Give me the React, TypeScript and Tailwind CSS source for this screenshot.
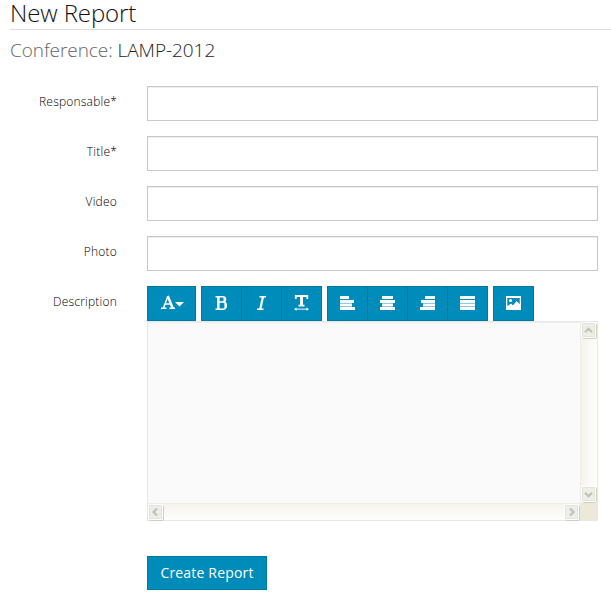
import type { ReactNode } from "react";

const labelClass = "w-[117px] shrink-0 pt-[6px] text-right text-[12px] leading-[20px] font-light tracking-[0.2px] text-black";

function Field({ label }: { label: string }) {
  return (
    <div className="mb-[15px] flex h-[35px]">
      <label className={labelClass}>{label}</label>
      <input className="ml-[30px] h-[35px] w-[451px] border border-[#c8c8c8] bg-white px-2 shadow-[inset_0_1px_1px_rgba(0,0,0,0.075)] outline-none" />
    </div>
  );
}

function Group({ children }: { children: ReactNode }) {
  return <div className="flex h-[35px] divide-x divide-[#0079a1] border border-[#0079a1] bg-[#008cba]">{children}</div>;
}

function Tool({ children }: { children: ReactNode }) {
  return (
    <button className="box-content flex h-[31px] w-[39px] items-center justify-center pb-[2px] text-white">{children}</button>
  );
}

function Lines({ rows }: { rows: number[][] }) {
  return (
    <svg width="15" height="14" viewBox="0 0 15 14" shapeRendering="crispEdges">
      <rect x={rows[0][0]} y="0" width={rows[0][1]} height="3" fill="#fff" />
      <rect x={rows[1][0]} y="4" width={rows[1][1]} height="3" fill="#fff" />
      <rect x={rows[2][0]} y="7" width={rows[2][1]} height="4" fill="#8fcbe0" />
      <rect x={rows[2][0]} y="8" width={rows[2][1]} height="2" fill="#fff" />
      <rect x={rows[3][0]} y="11" width={rows[3][1]} height="3" fill="#fff" />
    </svg>
  );
}

function ScrollButton({ d }: { d: string }) {
  return (
    <svg width="16" height="17" viewBox="0 0 16 17" className="block shrink-0">
      <rect x="1.5" y="1.5" width="14" height="15" rx="1.5" fill="none" stroke="#cfcfbd" />
      <rect x="0.5" y="0.5" width="14" height="15" rx="1" fill="#eeeee9" stroke="#fff" />
      <rect x="1.5" y="1.5" width="12" height="13" rx="1" fill="none" stroke="#e2e2da" />
      <path d={d} fill="none" stroke="#c0c0bc" strokeWidth="2.2" />
    </svg>
  );
}

export default function App() {
  return (
    <main className="h-[601px] w-[611px] bg-white font-['Open_Sans',sans-serif] text-[#222]">
      <h1 className="ml-[10px] h-[30px] border-b border-[#ddd] text-[24px] leading-[26px] font-light tracking-[-0.1px] text-[#111]">
        New Report
      </h1>
      <h2 className="ml-[10px] h-[56px] pt-[6px] text-[19px] leading-[28px] font-light tracking-[-0.06px] text-[#666]">
        Conference: <span className="text-[#222]">LAMP-2012</span>
      </h2>
      <form>
        <Field label="Responsable*" />
        <Field label="Title*" />
        <Field label="Video" />
        <Field label="Photo" />
        <div className="flex">
          <label className={labelClass}>Description</label>
          <div className="ml-[30px] w-[451px]">
            <div className="flex gap-[5px]">
              <Group>
                <button className="flex w-[47px] items-center justify-center pb-[2px] pl-[2px] text-white">
                  <svg width="23" height="15" viewBox="0 0 23 15">
                    <path d="M0 13.3h5.5M8.5 13.3H14M2.5 13 6.8 1.5M4 9h6" fill="none" stroke="#fff" strokeWidth="1.5" />
                    <path d="m6.8 1 4.8 12" stroke="#fff" strokeWidth="2.4" />
                    <path d="M14 7h9l-4.5 4.5z" fill="#fff" />
                  </svg>
                </button>
              </Group>
              <Group>
                <Tool>
                  <svg width="14" height="16" viewBox="0 0 14 16" fill="none" stroke="#fff">
                    <path d="M0.5 1.8h7c4 0 4 5.2 0 5.2H3.5M.5 14.2h7c5 0 5-7.2 0-7.2" strokeWidth="1.6" />
                    <path d="M3.3 2v12" strokeWidth="2.6" />
                    <path d="M9.5 3v3M10.4 8.5v4" strokeWidth="2" />
                  </svg>
                </Tool>
                <Tool>
                  <svg width="10" height="16" viewBox="0 0 10 16" fill="none" stroke="#fff">
                    <path d="M2.5 1.7H9M0 14.3h6.5" strokeWidth="1.5" />
                    <path d="M6 1.5 3.2 14.5" strokeWidth="2.2" />
                  </svg>
                </Tool>
                <Tool>
                  <svg width="15" height="17" viewBox="0 0 15 17" fill="none" stroke="#fff">
                    <path d="M1.8 5V2h11.5v3M4.5 11.7h6" strokeWidth="1.8" />
                    <path d="M7.5 2v10" strokeWidth="3" />
                    <path d="M1 15.2h13" stroke="#b0dcea" strokeWidth="1.4" />
                    <path d="m0 15.2 2.5-1.6v3.2zm15 0-2.5-1.6v3.2z" fill="#fff" stroke="none" />
                  </svg>
                </Tool>
              </Group>
              <Group>
                <Tool><Lines rows={[[0, 9], [0, 14], [0, 12], [0, 15]]} /></Tool>
                <Tool><Lines rows={[[2, 11], [0, 15], [2, 11], [0, 15]]} /></Tool>
                <Tool><Lines rows={[[5, 10], [1, 14], [3, 12], [0, 15]]} /></Tool>
                <Tool><Lines rows={[[0, 15], [0, 15], [0, 15], [0, 15]]} /></Tool>
              </Group>
              <Group>
                <Tool>
                  <svg width="15" height="14" viewBox="0 0 15 14">
                    <path d="M0 0h15v14H0z" fill="#fff" />
                    <path d="M1.3 2h12.4v7l-3-3-4 4-2-2-3.4 2z" fill="#008cba" />
                    <circle cx="4.5" cy="4.5" r="1.6" fill="#fff" />
                    <path d="m2 10.5 3-3 2 2L10.5 5 14 8.5V13H2z" fill="#fff" />
                  </svg>
                </Tool>
              </Group>
            </div>
            <div className="grid h-[200px] grid-cols-[1fr_17px] grid-rows-[1fr_17px] border border-[#e8e8e8] bg-[#fafafa] shadow-[inset_0_1px_0_#eee]">
              <div />
              <div className="flex flex-col justify-between border-l border-[#eeeee5] bg-linear-to-r from-[#f4f3ee] to-[#fefefb]">
                <ScrollButton d="m4 10.2 3.5-3.5 3.5 3.5" />
                <ScrollButton d="m4 6.7 3.5 3.5L11 6.7" />
              </div>
              <div className="flex justify-between border-t border-[#eeeee5] bg-linear-to-b from-[#f4f3ee] to-[#fefefb]">
                <ScrollButton d="M9 4.5 5.5 8 9 11.5" />
                <ScrollButton d="M6 4.5 9.5 8 6 11.5" />
              </div>
              <div className="bg-[#ece9d8]" />
            </div>
            <button className="mt-[35px] h-[34px] w-[120px] border border-[#0079a1] bg-[#008cba] text-[14px] leading-[32px] tracking-[0.18px] text-white">Create Report</button>
          </div>
        </div>
      </form>
    </main>
  );
}
